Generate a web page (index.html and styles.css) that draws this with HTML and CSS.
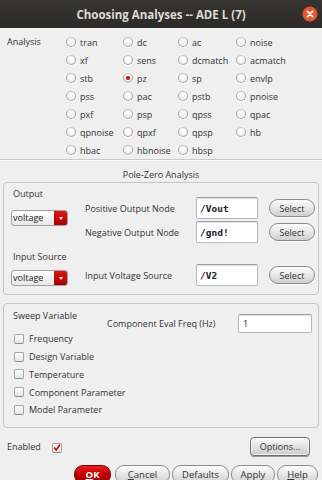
FILE: index.html
```html
<!DOCTYPE html>
<html>
<head>
<meta charset="utf-8">
<title>Choosing Analyses</title>
<link rel="stylesheet" href="styles.css">
</head>
<body>
<div class="win">
  <div class="titlebar">
    <span class="tspacer"></span>
    <span class="title">Choosing Analyses -- ADE L (7)</span>
    <span class="close"><svg width="16" height="16" viewBox="0 0 16 16"><circle cx="8" cy="8" r="7.5" fill="#e4572a"/><path d="M5.4 5.4 L10.6 10.6 M10.6 5.4 L5.4 10.6" stroke="#fff" stroke-width="1.7" stroke-linecap="round"/></svg></span>
  </div>

  <div class="analysis">
    <div class="alabel">Analysis</div>
    <div class="radios">
      <div class="radio"><span class="rb"></span>tran</div>
      <div class="radio"><span class="rb"></span>dc</div>
      <div class="radio"><span class="rb"></span>ac</div>
      <div class="radio"><span class="rb"></span>noise</div>
      <div class="radio"><span class="rb"></span>xf</div>
      <div class="radio"><span class="rb"></span>sens</div>
      <div class="radio"><span class="rb"></span>dcmatch</div>
      <div class="radio"><span class="rb"></span>acmatch</div>
      <div class="radio"><span class="rb"></span>stb</div>
      <div class="radio"><span class="rb on"></span>pz</div>
      <div class="radio"><span class="rb"></span>sp</div>
      <div class="radio"><span class="rb"></span>envlp</div>
      <div class="radio"><span class="rb"></span>pss</div>
      <div class="radio"><span class="rb"></span>pac</div>
      <div class="radio"><span class="rb"></span>pstb</div>
      <div class="radio"><span class="rb"></span>pnoise</div>
      <div class="radio"><span class="rb"></span>pxf</div>
      <div class="radio"><span class="rb"></span>psp</div>
      <div class="radio"><span class="rb"></span>qpss</div>
      <div class="radio"><span class="rb"></span>qpac</div>
      <div class="radio"><span class="rb"></span>qpnoise</div>
      <div class="radio"><span class="rb"></span>qpxf</div>
      <div class="radio"><span class="rb"></span>qpsp</div>
      <div class="radio"><span class="rb"></span>hb</div>
      <div class="radio"><span class="rb"></span>hbac</div>
      <div class="radio"><span class="rb"></span>hbnoise</div>
      <div class="radio"><span class="rb"></span>hbsp</div>
    </div>
  </div>
  <div class="sep"></div>

  <div class="pzhead">Pole-Zero Analysis</div>

  <div class="group pz">
    <div class="block b1">
      <div class="left l1">
        <div class="glabel">Output</div>
        <div class="combo"><span class="ctext">voltage</span><span class="carrow"></span></div>
      </div>
      <div class="right r1">
        <div class="frow"><span class="flabel">Positive Output Node</span><span class="field mono">/Vout</span><span class="btn sel">Select</span></div>
        <div class="frow"><span class="flabel">Negative Output Node</span><span class="field mono">/gnd!</span><span class="btn sel">Select</span></div>
      </div>
    </div>
    <div class="block b2">
      <div class="left l2">
        <div class="glabel">Input Source</div>
        <div class="combo c2"><span class="ctext">voltage</span><span class="carrow"></span></div>
      </div>
      <div class="right r2">
        <div class="frow"><span class="flabel">Input Voltage Source</span><span class="field mono">/V2</span><span class="btn sel">Select</span></div>
      </div>
    </div>
  </div>

  <div class="group sweep">
    <div class="sleft">
      <div class="glabel">Sweep Variable</div>
      <div class="checks">
        <div class="chk"><span class="cb"></span>Frequency</div>
        <div class="chk"><span class="cb"></span>Design Variable</div>
        <div class="chk"><span class="cb"></span>Temperature</div>
        <div class="chk"><span class="cb"></span>Component Parameter</div>
        <div class="chk"><span class="cb"></span>Model Parameter</div>
      </div>
    </div>
    <div class="sright">
      <span class="evlabel">Component Eval Freq (Hz)</span>
      <span class="field evfield">1</span>
    </div>
  </div>

  <div class="enrow">
    <span class="enlabel">Enabled</span>
    <span class="cb encb"><svg width="9" height="9" viewBox="0 0 9 9"><path d="M1.3 4.6 L3.6 7.2 L7.8 1.2" fill="none" stroke="#d40000" stroke-width="1.8"/></svg></span>
    <span class="grow"></span>
    <span class="optbtn">Options...</span>
  </div>

  <div class="btnrow">
    <span class="btn big ok"><u>O</u>K</span>
    <span class="btn big cancel"><u>C</u>ancel</span>
    <span class="btn big defaults">Defaults</span>
    <span class="btn big apply">Apply</span>
    <span class="btn big help"><u>H</u>elp</span>
  </div>
</div>
</body>
</html>
```

FILE: styles.css
```css
html, body {
  margin: 0;
  padding: 0;
}
body {
  width: 322px;
  height: 480px;
  overflow: hidden;
  background: #efefef;
  font-family: "Open Sans", "DejaVu Sans", sans-serif;
  font-size: 9px;
  color: #333;
}
.win {
  display: flex;
  flex-direction: column;
  width: 322px;
}

/* title bar */
.titlebar {
  height: 28px;
  background: linear-gradient(#363532, #2c2b29);
  display: flex;
  align-items: center;
  padding: 0 4px;
}
.tspacer { width: 16px; }
.title {
  flex: 1;
  text-align: center;
  color: #dfdbd2;
  font-weight: bold;
  font-size: 11.5px;
}
.close {
  width: 16px;
  height: 16px;
  display: flex;
}

/* analysis radio grid */
.analysis {
  display: flex;
  padding-top: 5px;
  height: 126px;
}
.alabel {
  width: 59px;
  padding-left: 7px;
  line-height: 18px;
}
.radios {
  display: grid;
  grid-template-columns: 57px 55px 58px 1fr;
  grid-auto-rows: 18px;
  flex: 1;
}
.radio {
  display: flex;
  align-items: center;
  gap: 4px;
}
.rb {
  width: 8px;
  height: 8px;
  border-radius: 50%;
  border: 1px solid #a8a8a8;
  border-top-color: #c6c6c6;
  background: radial-gradient(circle at 50% 35%, #ffffff 0%, #f4f4f4 50%, #dadada 100%);
  box-shadow: 0 1px 0 #fff;
  display: flex;
  align-items: center;
  justify-content: center;
  flex: none;
}
.rb.on::after {
  content: "";
  width: 4px;
  height: 4px;
  border-radius: 50%;
  background: #d00000;
}
.sep {
  height: 1px;
  background: #c9c9c9;
  border-bottom: 1px solid #fbfbfb;
}

.pzhead {
  text-align: center;
  padding-top: 8px;
  line-height: 12px;
  height: 13px;
}

/* group boxes */
.group {
  margin: 0 3px;
  border: 1px solid #c6c6c6;
  border-radius: 4px;
}
.pz {
  height: 111px;
  display: flex;
  flex-direction: column;
}
.block { display: flex; }
.b1 { height: 60px; }
.left {
  width: 74px;
  padding-left: 7px;
  display: flex;
  flex-direction: column;
  align-items: flex-start;
}
.glabel {
  line-height: 12px;
  padding-left: 2px;
  white-space: nowrap;
}
.l1 .glabel { margin-top: 5px; }
.l1 .combo { margin-top: 10px; }
.l2 .glabel { margin-top: 8px; }
.l2 .combo { margin-top: 7px; }
.right {
  display: flex;
  flex-direction: column;
  gap: 2px;
}
.r1 { padding-top: 14px; }
.r2 { padding-top: 21px; }
.frow {
  display: flex;
  align-items: center;
  height: 22px;
}
.flabel {
  width: 111px;
  white-space: nowrap;
}
.field {
  box-sizing: border-box;
  background: #fff;
  border: 1px solid #b9b9b9;
  border-top-color: #9e9e9e;
  border-radius: 2px;
  box-shadow: inset 0 1px 1px rgba(0,0,0,0.12);
  display: flex;
  align-items: center;
  padding-left: 3px;
}
.frow .field {
  width: 62px;
  height: 22px;
  margin-right: 11px;
}
.mono {
  font-family: "DejaVu Sans Mono", "Liberation Mono", monospace;
  font-weight: bold;
  font-size: 9.5px;
  color: #222;
}

/* combo */
.combo {
  box-sizing: border-box;
  width: 57px;
  height: 16px;
  display: flex;
  border: 1px solid #a2a2a2;
  border-radius: 3px;
  background: linear-gradient(#ffffff, #e6e6e6);
  overflow: hidden;
}
.ctext {
  flex: 1;
  padding-left: 1px;
  line-height: 14px;
  color: #222;
}
.carrow {
  width: 13px;
  background: linear-gradient(#e01515, #a80000);
  display: flex;
  align-items: center;
  justify-content: center;
}
.carrow::after {
  content: "";
  border-left: 2.5px solid transparent;
  border-right: 2.5px solid transparent;
  border-top: 3px solid #fff;
}

/* buttons */
.btn {
  box-sizing: border-box;
  display: flex;
  align-items: center;
  justify-content: center;
  border: 1px solid #8c8c8c;
  border-radius: 9px;
  background: linear-gradient(#fdfdfd, #e9e9e9 45%, #cfcfcf);
  color: #333;
  white-space: nowrap;
  box-shadow: 0 1px 0 rgba(255,255,255,0.8);
}
.sel {
  width: 46px;
  height: 18px;
}

/* sweep */
.sweep {
  margin-top: 8px;
  height: 123px;
  display: flex;
}
.sleft {
  width: 94px;
  padding-left: 9px;
  white-space: nowrap;
}
.sleft .glabel {
  margin-top: 6px;
  padding-left: 0;
}
.checks {
  margin-top: 8px;
}
.chk {
  display: flex;
  align-items: center;
  height: 17.75px;
  gap: 5px;
  padding-left: 1px;
}
.cb {
  box-sizing: border-box;
  width: 10px;
  height: 10px;
  border: 1px solid #a4a4a4;
  border-bottom-color: #8e8e8e;
  border-radius: 2px;
  background: linear-gradient(#ffffff, #e4e4e4);
  flex: none;
}
.sright {
  display: flex;
  align-items: center;
  margin-top: 10px;
  height: 19px;
}
.evlabel {
  width: 131px;
  white-space: nowrap;
}
.evfield {
  width: 74px;
  height: 19px;
  padding-left: 4px;
  color: #222;
}

/* enabled row */
.enrow {
  display: flex;
  align-items: center;
  height: 19px;
  margin-top: 9px;
  padding: 0 12px 0 7px;
}
.enlabel { margin-right: 11px; }
.encb {
  width: 10px;
  height: 10px;
  display: flex;
  align-items: center;
  justify-content: center;
  margin-top: 2px;
}
.grow { flex: 1; }
.optbtn {
  box-sizing: border-box;
  width: 60px;
  height: 19px;
  display: flex;
  align-items: center;
  justify-content: center;
  border: 1px solid #6f6f6f;
  border-radius: 4px;
  background: linear-gradient(#fafafa, #e2e2e2 50%, #cdcdcd);
  box-shadow: inset 0 0 0 1px rgba(255,255,255,0.7), 0 1px 0 #999;
}

/* bottom button row */
.btnrow {
  display: flex;
  justify-content: flex-end;
  gap: 2px;
  margin-top: 9px;
  padding-right: 4px;
}
.big {
  height: 19px;
  font-size: 9.5px;
}
.ok {
  width: 37px;
  background: linear-gradient(#e82020, #c00000 50%, #a00000);
  border-color: #7a0000;
  color: #fff;
  font-weight: bold;
  margin-right: 2px;
}
.cancel { width: 55px; }
.defaults { width: 57px; }
.apply { width: 44px; }
.help { width: 41px; }
u { text-underline-offset: 1px; }
```
